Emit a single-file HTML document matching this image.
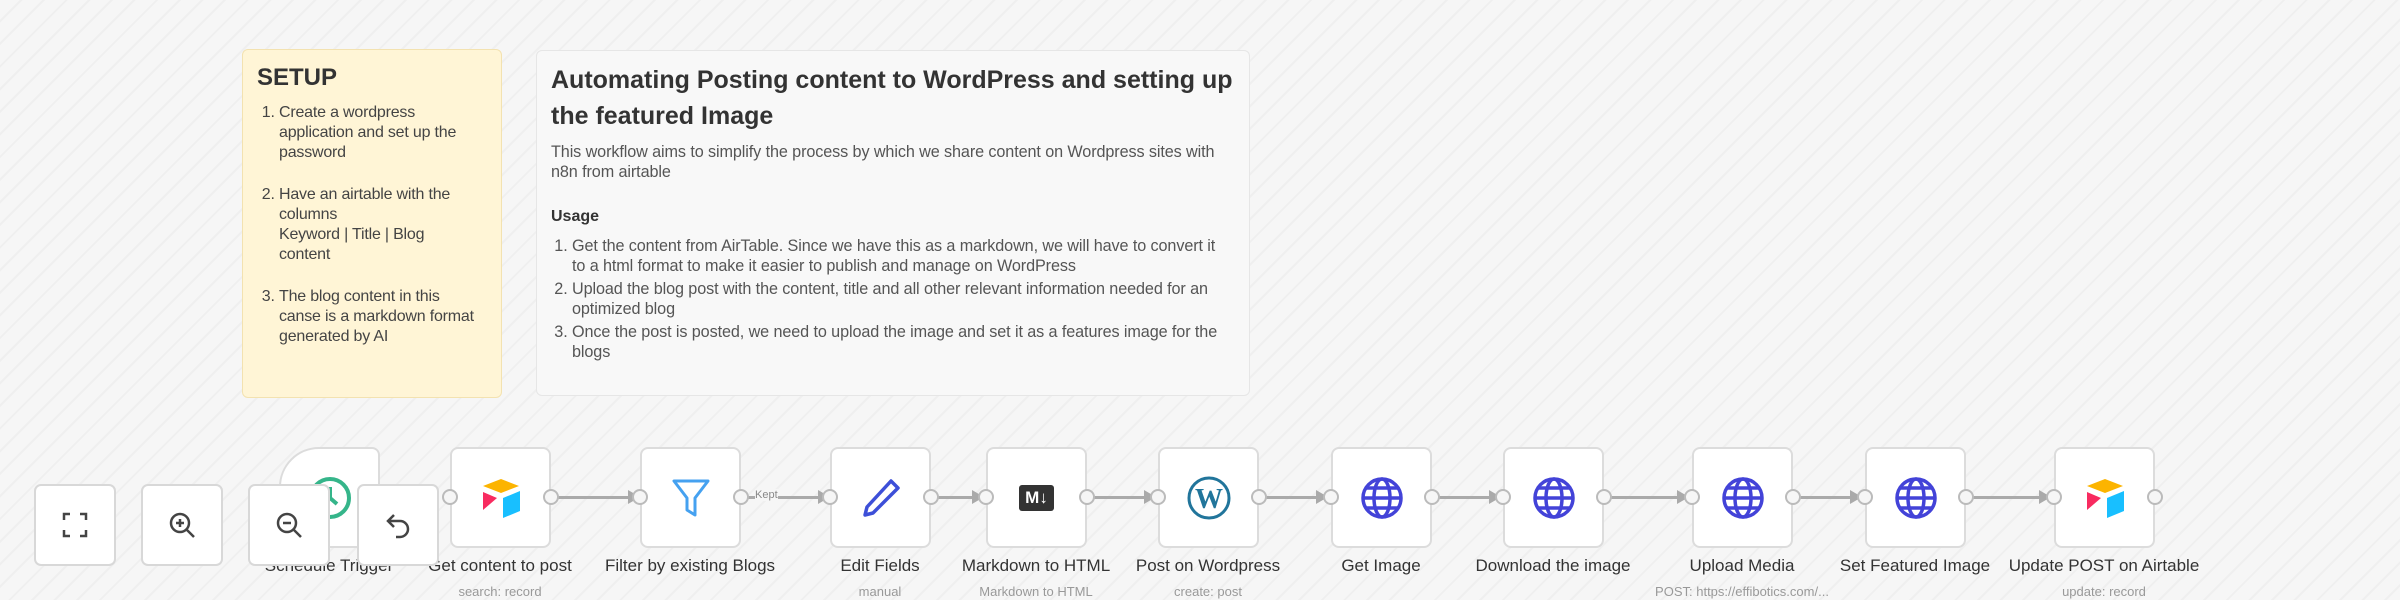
<!DOCTYPE html>
<html><head><meta charset="utf-8"><style>
*{box-sizing:border-box;margin:0;padding:0}
body{width:2400px;height:600px;overflow:hidden;position:relative;font-family:"Liberation Sans",sans-serif;
background:#f6f6f6 repeating-linear-gradient(135deg,#f6f6f6 0 14px,#efefef 14px 16px);}
.abs{position:absolute}
.setup{left:242px;top:49px;width:260px;height:349px;background:#fff5d6;border:1px solid #f3e2b0;border-radius:6px;padding:14px 14px;color:#444}
.setup h1{font-size:24px;color:#333;font-weight:bold;margin-bottom:11px}
.setup ol{font-size:16px;line-height:20px;padding-left:22px;white-space:nowrap;letter-spacing:-0.2px}
.setup li{margin-bottom:22px}
.big{left:536px;top:50px;width:714px;height:346px;background:#f8f8f8;border:1px solid #e6e6e6;border-radius:6px;padding:11px 14px;color:#555}
.big h1{font-size:25px;line-height:36px;color:#333;font-weight:bold;margin-bottom:8px;white-space:nowrap}
.big p{font-size:16.2px;line-height:20px;white-space:nowrap;letter-spacing:-0.1px}
.big h2{font-size:16px;color:#333;margin:26px 0 10px}
.big ol{font-size:16.2px;line-height:20px;padding-left:21px;white-space:nowrap;letter-spacing:-0.1px}
.big li{margin-bottom:3px}
.node{position:absolute;top:447px;width:101px;height:101px;background:#fff;border:2px solid #dcdcdc;border-radius:8px;display:flex;align-items:center;justify-content:center}
.lbl{position:absolute;top:556px;width:240px;text-align:center;font-size:17px;color:#333}
.sub{position:absolute;top:584px;width:260px;text-align:center;font-size:13px;color:#999}
.dot{position:absolute;top:489px;width:16px;height:16px;border:2px solid #bbb;border-radius:50%;background:#f6f6f6}
.edge{position:absolute;top:496px;height:3px;background:#aaa}
.arr{position:absolute;top:490px;width:0;height:0;border-left:12px solid #aaa;border-top:7px solid transparent;border-bottom:7px solid transparent}
.btn{position:absolute;top:484px;width:82px;height:82px;background:#fff;border:2px solid #d8d8d8;border-radius:7px;display:flex;align-items:center;justify-content:center}
</style></head><body>

<div class="abs setup">
<h1>SETUP</h1>
<ol>
<li>Create a wordpress<br>application and set up the<br>password</li>
<li>Have an airtable with the<br>columns<br>Keyword | Title | Blog<br>content</li>
<li>The blog content in this<br>canse is a markdown format<br>generated by AI</li>
</ol>
</div>

<div class="abs big">
<h1>Automating Posting content to WordPress and setting up<br>the featured Image</h1>
<p>This workflow aims to simplify the process by which we share content on Wordpress sites with<br>n8n from airtable</p>
<h2>Usage</h2>
<ol>
<li>Get the content from AirTable. Since we have this as a markdown, we will have to convert it<br>to a html format to make it easier to publish and manage on WordPress</li>
<li>Upload the blog post with the content, title and all other relevant information needed for an<br>optimized blog</li>
<li>Once the post is posted, we need to upload the image and set it as a features image for the<br>blogs</li>
</ol>
</div>

<!-- edges -->
<div class="edge" style="left:558px;width:70px"></div><div class="arr" style="left:628px"></div>
<div class="edge" style="left:748px;width:70px"></div><div class="arr" style="left:818px"></div>
<div class="abs" style="left:755px;top:489px;font-size:11px;color:#888;background:#f6f6f6">Kept</div>
<div class="edge" style="left:938px;width:34px"></div><div class="arr" style="left:972px"></div>
<div class="edge" style="left:1094px;width:50px"></div><div class="arr" style="left:1144px"></div>
<div class="edge" style="left:1266px;width:50px"></div><div class="arr" style="left:1316px"></div>
<div class="edge" style="left:1439px;width:50px"></div><div class="arr" style="left:1489px"></div>
<div class="edge" style="left:1611px;width:66px"></div><div class="arr" style="left:1677px"></div>
<div class="edge" style="left:1800px;width:50px"></div><div class="arr" style="left:1850px"></div>
<div class="edge" style="left:1973px;width:66px"></div><div class="arr" style="left:2039px"></div>

<!-- schedule trigger -->
<div class="node" style="left:279px;border-radius:40px 8px 8px 40px">
<svg width="46" height="46" viewBox="0 0 46 46"><circle cx="23" cy="23" r="19" fill="none" stroke="#35b58a" stroke-width="4"/><path d="M23 12v11l7 6" fill="none" stroke="#35b58a" stroke-width="4"/></svg></div>
<div class="lbl" style="left:209px">Schedule Trigger</div>

<!-- airtable -->
<div class="node" style="left:450px"><svg width="44" height="44" viewBox="0 0 44 44"><path d="M22 3L40 10 22 17 4 10Z" fill="#fcb400"/><path d="M4 16L18 22 4 34Z" fill="#f82b60"/><path d="M24 22L41 15V35L24 42Z" fill="#18bfff"/></svg></div>
<div class="dot" style="left:442px"></div><div class="dot" style="left:543px"></div>
<div class="lbl" style="left:380px">Get content to post</div><div class="sub" style="left:370px">search: record</div>

<!-- filter -->
<div class="node" style="left:640px"><svg width="40" height="44" viewBox="0 0 40 44"><path d="M3 5H37L24 22V39L16 34V22Z" fill="none" stroke="#45a1f0" stroke-width="3" stroke-linejoin="round"/></svg></div>
<div class="dot" style="left:632px"></div><div class="dot" style="left:733px"></div>
<div class="lbl" style="left:570px">Filter by existing Blogs</div>

<!-- edit fields -->
<div class="node" style="left:830px"><svg width="44" height="44" viewBox="0 0 44 44"><path d="M32 5l7 7L14 37 6 39 8 31Z" fill="none" stroke="#3d4fd8" stroke-width="3.5" stroke-linejoin="round"/></svg></div>
<div class="dot" style="left:822px"></div><div class="dot" style="left:923px"></div>
<div class="lbl" style="left:760px">Edit Fields</div><div class="sub" style="left:750px">manual</div>

<!-- markdown -->
<div class="node" style="left:986px"><div style="background:#333;color:#fff;font-weight:bold;font-size:17px;padding:3px 6px;border-radius:3px">M↓</div></div>
<div class="dot" style="left:978px"></div><div class="dot" style="left:1079px"></div>
<div class="lbl" style="left:916px">Markdown to HTML</div><div class="sub" style="left:906px">Markdown to HTML</div>

<!-- wordpress -->
<div class="node" style="left:1158px"><svg width="46" height="46" viewBox="0 0 46 46"><circle cx="23" cy="23" r="20" fill="none" stroke="#21759b" stroke-width="3"/><text x="23" y="33" text-anchor="middle" font-family="Liberation Serif" font-size="28" font-weight="bold" fill="#21759b">W</text></svg></div>
<div class="dot" style="left:1150px"></div><div class="dot" style="left:1251px"></div>
<div class="lbl" style="left:1088px">Post on Wordpress</div><div class="sub" style="left:1078px">create: post</div>

<!-- globes -->
<div class="node" style="left:1331px"><svg width="46" height="46" viewBox="0 0 46 46" fill="none" stroke="#4343d8" stroke-width="3.5"><circle cx="23" cy="23" r="19"/><ellipse cx="23" cy="23" rx="8" ry="19"/><path d="M4 23H42M7 13H39M7 33H39"/></svg></div>
<div class="dot" style="left:1323px"></div><div class="dot" style="left:1424px"></div>
<div class="lbl" style="left:1261px">Get Image</div>

<div class="node" style="left:1503px"><svg width="46" height="46" viewBox="0 0 46 46" fill="none" stroke="#4343d8" stroke-width="3.5"><circle cx="23" cy="23" r="19"/><ellipse cx="23" cy="23" rx="8" ry="19"/><path d="M4 23H42M7 13H39M7 33H39"/></svg></div>
<div class="dot" style="left:1495px"></div><div class="dot" style="left:1596px"></div>
<div class="lbl" style="left:1433px">Download the image</div>

<div class="node" style="left:1692px"><svg width="46" height="46" viewBox="0 0 46 46" fill="none" stroke="#4343d8" stroke-width="3.5"><circle cx="23" cy="23" r="19"/><ellipse cx="23" cy="23" rx="8" ry="19"/><path d="M4 23H42M7 13H39M7 33H39"/></svg></div>
<div class="dot" style="left:1684px"></div><div class="dot" style="left:1785px"></div>
<div class="lbl" style="left:1622px">Upload Media</div><div class="sub" style="left:1612px">POST: https://effibotics.com/...</div>

<div class="node" style="left:1865px"><svg width="46" height="46" viewBox="0 0 46 46" fill="none" stroke="#4343d8" stroke-width="3.5"><circle cx="23" cy="23" r="19"/><ellipse cx="23" cy="23" rx="8" ry="19"/><path d="M4 23H42M7 13H39M7 33H39"/></svg></div>
<div class="dot" style="left:1857px"></div><div class="dot" style="left:1958px"></div>
<div class="lbl" style="left:1795px">Set Featured Image</div>

<div class="node" style="left:2054px"><svg width="44" height="44" viewBox="0 0 44 44"><path d="M22 3L40 10 22 17 4 10Z" fill="#fcb400"/><path d="M4 16L18 22 4 34Z" fill="#f82b60"/><path d="M24 22L41 15V35L24 42Z" fill="#18bfff"/></svg></div>
<div class="dot" style="left:2046px"></div><div class="dot" style="left:2147px"></div>
<div class="lbl" style="left:1984px">Update POST on Airtable</div><div class="sub" style="left:1974px">update: record</div>

<!-- controls -->
<div class="btn" style="left:34px"><svg width="28" height="28" viewBox="0 0 28 28" fill="none" stroke="#444" stroke-width="2.5"><path d="M3 9V3H9M19 3H25V9M25 19V25H19M9 25H3V19"/></svg></div>
<div class="btn" style="left:141px"><svg width="30" height="30" viewBox="0 0 30 30" fill="none" stroke="#444" stroke-width="2.5"><circle cx="13" cy="13" r="9"/><path d="M20 20L27 27M13 9V17M9 13H17"/></svg></div>
<div class="btn" style="left:248px"><svg width="30" height="30" viewBox="0 0 30 30" fill="none" stroke="#444" stroke-width="2.5"><circle cx="13" cy="13" r="9"/><path d="M20 20L27 27M9 13H17"/></svg></div>
<div class="btn" style="left:357px"><svg width="28" height="28" viewBox="0 0 28 28" fill="none" stroke="#444" stroke-width="2.5"><path d="M10 4L4 10 10 16M4 10H16A8 8 0 0 1 16 26H12"/></svg></div>

</body></html>
